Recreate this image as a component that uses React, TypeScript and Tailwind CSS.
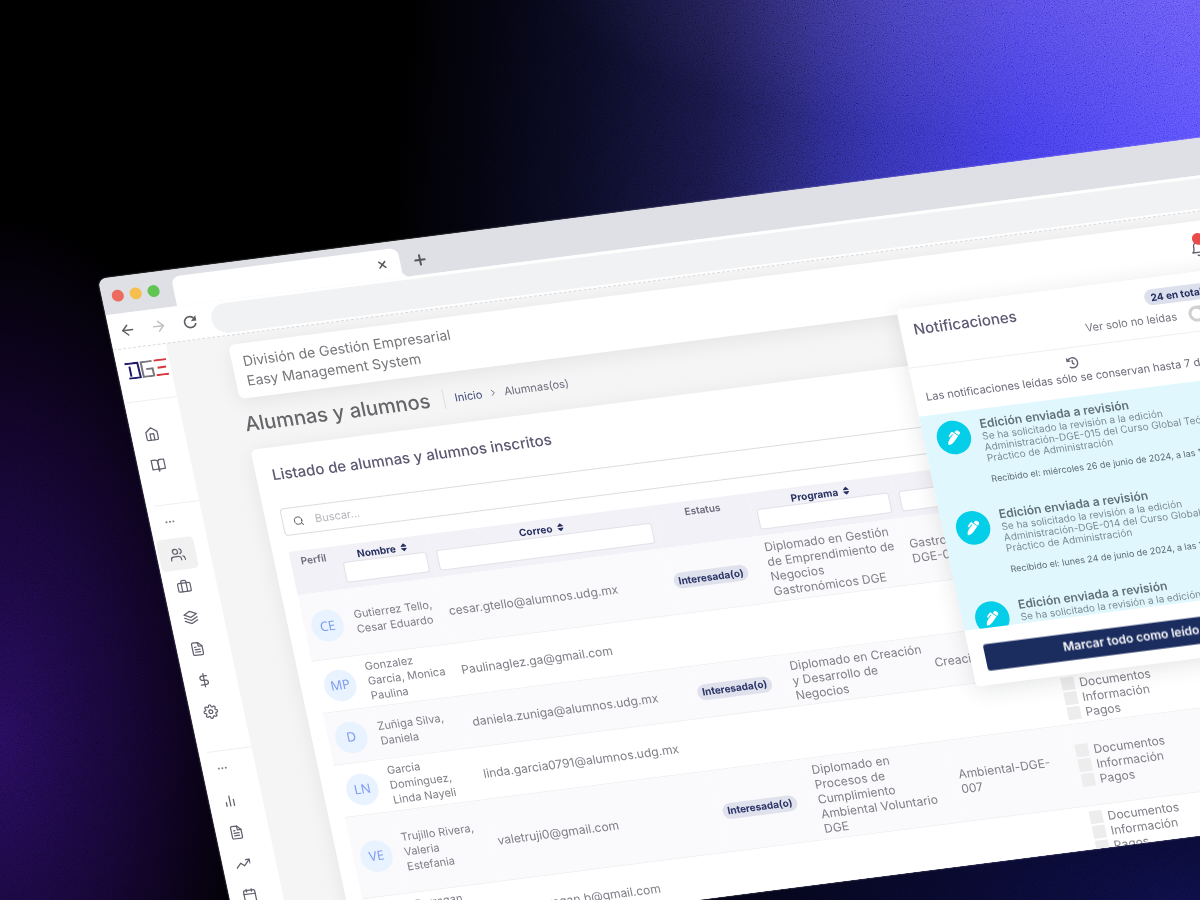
import type { ReactNode } from 'react';
import type { IconType } from 'react-icons';
import {
  FiArrowLeft,
  FiArrowRight,
  FiBarChart2,
  FiBell,
  FiBookOpen,
  FiBriefcase,
  FiCalendar,
  FiChevronRight,
  FiDollarSign,
  FiFileText,
  FiHome,
  FiLayers,
  FiMoreHorizontal,
  FiPlus,
  FiSearch,
  FiSettings,
  FiTrendingUp,
  FiUsers,
  FiX,
} from 'react-icons/fi';
import { FaHistory, FaPenAlt, FaSort } from 'react-icons/fa';
import { MdRefresh } from 'react-icons/md';

type NavEntry = { label: string; icon: IconType; active?: boolean };

const navGroups: NavEntry[][] = [
  [
    { label: 'Inicio', icon: FiHome },
    { label: 'Programas', icon: FiBookOpen },
  ],
  [
    { label: 'Alumnos', icon: FiUsers, active: true },
    { label: 'Docentes', icon: FiBriefcase },
    { label: 'Ediciones', icon: FiLayers },
    { label: 'Documentos', icon: FiFileText },
    { label: 'Pagos', icon: FiDollarSign },
    { label: 'Ajustes', icon: FiSettings },
  ],
  [
    { label: 'Estadísticas', icon: FiBarChart2 },
    { label: 'Reportes', icon: FiFileText },
    { label: 'Tendencias', icon: FiTrendingUp },
    { label: 'Calendario', icon: FiCalendar },
  ],
];

type Student = {
  initials: string;
  name: string[];
  email: string;
  status?: string;
  program?: string[];
  edition?: string[];
  documents?: boolean;
};

const students: Student[] = [
  {
    initials: 'CE',
    name: ['Gutierrez Tello,', 'Cesar Eduardo'],
    email: 'cesar.gtello@alumnos.udg.mx',
    status: 'Interesada(o)',
    program: ['Diplomado en Gestión', 'de Emprendimiento de', 'Negocios', 'Gastronómicos DGE'],
    edition: ['Gastronómicos-', 'DGE-001'],
    documents: true,
  },
  {
    initials: 'MP',
    name: ['Gonzalez', 'García, Monica', 'Paulina'],
    email: 'Paulinaglez.ga@gmail.com',
    documents: true,
  },
  {
    initials: 'D',
    name: ['Zuñiga Silva,', 'Daniela'],
    email: 'daniela.zuniga@alumnos.udg.mx',
    status: 'Interesada(o)',
    program: ['Diplomado en Creación', 'y Desarrollo de', 'Negocios'],
    edition: ['Creación-DGE'],
    documents: true,
  },
  {
    initials: 'LN',
    name: ['García', 'Domínguez,', 'Linda Nayeli'],
    email: 'linda.garcia0791@alumnos.udg.mx',
    documents: true,
  },
  {
    initials: 'VE',
    name: ['Trujillo Rivera,', 'Valeria', 'Estefania'],
    email: 'valetruji0@gmail.com',
    status: 'Interesada(o)',
    program: ['Diplomado en', 'Procesos de', 'Cumplimiento', 'Ambiental Voluntario', 'DGE'],
    edition: ['Ambiental-DGE-', '007'],
    documents: true,
  },
  {
    initials: 'BG',
    name: ['Barragan', 'Gomez,', 'Berenice'],
    email: 'be.barragan.b@gmail.com',
    documents: true,
  },
];

const notifications = [
  { edition: '015', date: 'miércoles 26 de junio de 2024, a las 10:12' },
  { edition: '014', date: 'lunes 24 de junio de 2024, a las 12:40' },
  { edition: '013', date: 'viernes 21 de junio de 2024, a las 09:05' },
];

function Backdrop() {
  return (
    <div aria-hidden="true" className="absolute inset-0 bg-black">
      <div className="absolute inset-0 bg-[radial-gradient(ellipse_700px_260px_at_100%_100%,#0c0d40,transparent)]" />
      <div className="absolute inset-0 bg-[radial-gradient(ellipse_260px_520px_at_0%_82%,#230b52,#13052d_50%,transparent)]" />
      <div className="absolute inset-x-0 top-0 h-1/2 bg-[linear-gradient(95deg,transparent_33%,#04040f_40%,#0b0b24_49%,#161540_58%,#24236a_65%,#322faa_73%,#3e37e2_83%,#574dff_100%)]" />
      <div className="absolute inset-x-0 top-0 h-1/2 bg-[radial-gradient(ellipse_560px_170px_at_92%_-6%,#8270e050,transparent)]" />
      <svg className="absolute inset-0 h-full w-full opacity-40 mix-blend-overlay">
        <filter id="grain">
          <feTurbulence type="fractalNoise" baseFrequency="0.9" numOctaves="3" stitchTiles="stitch" />
          <feColorMatrix type="matrix" values="1 1 0 0 -0.5  1 1 0 0 -0.5  1 1 0 0 -0.5  0 0 0 0 1" />
        </filter>
        <rect width="100%" height="100%" filter="url(#grain)" />
      </svg>
    </div>
  );
}

function BrowserChrome() {
  return (
    <header>
      <div className="flex h-[37px] items-end bg-[#dfe0e5]">
        <div className="flex h-full w-[72px] items-center gap-[6px] pl-[10px]">
          <span className="size-3 rounded-full bg-[#ec6a5e]" />
          <span className="size-3 rounded-full bg-[#f4bf4f]" />
          <span className="size-3 rounded-full bg-[#61c554]" />
        </div>
        <div className="flex h-[30px] w-[228px] items-center justify-end rounded-t-lg bg-white pr-3">
          <button type="button" aria-label="Cerrar pestaña" className="text-[#55585c]">
            <FiX className="size-3" strokeWidth={3} />
          </button>
        </div>
        <span className="size-2 bg-[radial-gradient(circle_at_100%_0%,#dfe0e5_8px,#ffffff_9px)]" />
        <button type="button" aria-label="Nueva pestaña" className="flex h-[30px] items-center pl-1 text-[#55585c]">
          <FiPlus className="size-4" strokeWidth={3} />
        </button>
      </div>
      <div className="flex h-9 items-center border-b border-dashed border-[#d9d9d9] bg-white pl-[10px]">
        <button type="button" aria-label="Atrás" className="w-[31px] text-[#5c5f63]">
          <FiArrowLeft className="size-[17px]" />
        </button>
        <button type="button" aria-label="Adelante" className="w-[31px] text-[#bdbfc2]">
          <FiArrowRight className="size-[17px]" />
        </button>
        <button type="button" aria-label="Recargar" className="w-[31px] text-[#5c5f63]">
          <MdRefresh className="size-[19px]" />
        </button>
        <input
          type="text"
          aria-label="Dirección"
          className="h-[30px] min-w-0 flex-1 rounded-l-full bg-[#f0f2f4] px-4 text-xs outline-none"
        />
      </div>
    </header>
  );
}

function Logo() {
  return (
    <svg viewBox="0 0 84 34" role="img" aria-label="DGE" className="h-[17px] w-[42px]" fill="none" strokeWidth="4">
      <path d="M0 2h26l1 30H4M9 8v20" stroke="#1f1a6b" />
      <path d="M55 2H33v30h21V17H41" stroke="#77777b" />
      <path d="M59 2h25M64 17h17M59 32h25" stroke="#d8383c" />
    </svg>
  );
}

function Sidebar() {
  return (
    <nav aria-label="Principal" className="w-[53px] shrink-0 bg-white text-[#625f6e]">
      <div className="flex h-[54px] items-center justify-center border-b border-[#efefef] pb-2 pl-1">
        <Logo />
      </div>
      <div className="pt-[17px]">
        {navGroups.map((group, index) => (
          <div key={index} className={index > 0 ? 'mt-6' : ''}>
            {index > 0 && (
              <div className="ml-2 border-t border-[#efefef]">
                <FiMoreHorizontal className="ml-[6px] h-[34px] w-3 opacity-80" />
              </div>
            )}
            <ul>
              {group.map(({ label, icon: Icon, active }) => (
                <li key={label}>
                  <a
                    href="#"
                    aria-label={label}
                    className={
                      active
                        ? 'ml-[2px] flex h-8 w-[37px] items-center justify-center rounded-sm bg-[#f1f1f1]'
                        : 'ml-[2px] flex h-8 w-[37px] items-center justify-center'
                    }
                  >
                    <Icon className="size-[15px]" />
                  </a>
                </li>
              ))}
            </ul>
          </div>
        ))}
      </div>
    </nav>
  );
}

function TopBar() {
  return (
    <div className="flex h-[55px] items-center justify-between rounded-md bg-white pr-7 pl-[11px] shadow-[0_4px_20px_rgba(34,41,47,0.08)]">
      <p className="text-[14px] leading-5 text-[#77777b]">
        División de Gestión Empresarial
        <br />
        Easy Management System
      </p>
      <button type="button" aria-label="Notificaciones" className="relative text-[#625f6e]">
        <FiBell className="size-4" />
        <span className="absolute -top-2 left-1 size-3 rounded-full bg-[#ea4a4a]" />
      </button>
    </div>
  );
}

function PageTitle() {
  return (
    <div className="flex h-[52px] items-center">
      <h1 className="text-[20px] font-medium text-[#66666a]">Alumnas y alumnos</h1>
      <nav aria-label="Ruta" className="ml-[14px] flex h-5 items-center gap-[6px] border-l border-[#dedee2] pl-[10px] text-[11px]">
        <a href="#" className="text-[#3f4a7c]">
          Inicio
        </a>
        <FiChevronRight className="size-[10px] text-[#6e6b7b]" />
        <span className="text-[#6e6b7b]">Alumnas(os)</span>
      </nav>
    </div>
  );
}

function HeaderCell({ label, sortable }: { label: string; sortable?: boolean }) {
  return (
    <th scope="col" className="px-[5px] pt-[3px] pb-[6px] text-center align-top text-[10px] leading-[14px] font-bold">
      {sortable ? (
        <>
          <button type="button" className="mx-auto flex items-center gap-[3px] text-[#273061]">
            {label}
            <FaSort className="size-[10px]" />
          </button>
          <input
            type="text"
            aria-label={`Filtrar ${label}`}
            className="block h-[21px] w-full rounded-[3px] border border-[#e2e1e8] bg-white px-2 text-[10px] font-normal outline-none"
          />
        </>
      ) : (
        <span className="font-semibold text-[#6e6b7b]">{label}</span>
      )}
    </th>
  );
}

function Lines({ lines }: { lines?: string[] }) {
  return (
    <>
      {(lines ?? []).map((line) => (
        <span key={line} className="block whitespace-nowrap">
          {line}
        </span>
      ))}
    </>
  );
}

function Cell({ children }: { children?: ReactNode }) {
  return <td className="border-b border-[#f0f0f3] px-[5px] pt-1 pb-[3px] align-middle">{children}</td>;
}

function StudentTable() {
  return (
    <table className="w-full table-fixed border-separate border-spacing-0 text-left">
      <colgroup>
        <col className="w-[46px]" />
        <col className="w-[94px]" />
        <col className="w-[227px]" />
        <col className="w-[96px]" />
        <col className="w-[143px]" />
        <col className="w-[120px]" />
        <col />
      </colgroup>
      <thead className="bg-[#f2f1f7]">
        <tr>
          <HeaderCell label="Perfil" />
          <HeaderCell label="Nombre" sortable />
          <HeaderCell label="Correo" sortable />
          <HeaderCell label="Estatus" />
          <HeaderCell label="Programa" sortable />
          <HeaderCell label="ID" sortable />
          <HeaderCell label="Expediente" />
        </tr>
      </thead>
      <tbody className="text-[12px] leading-[15px] text-[#807e87]">
        {students.map((s, i) => (
          <tr key={s.initials} className={i % 2 === 0 ? 'bg-[#fafafc]' : 'bg-white'}>
            <Cell>
              <span className="mx-auto flex size-8 items-center justify-center rounded-full bg-[#e9f3ff] font-['Noto_Sans',sans-serif] text-[13px] text-[#7f9cf0]">
                {s.initials}
              </span>
            </Cell>
            <Cell>
              <div className="text-[11px] leading-[15px]">
                <Lines lines={s.name} />
              </div>
            </Cell>
            <Cell>
              <a href={`mailto:${s.email}`} className="whitespace-nowrap">
                {s.email}
              </a>
            </Cell>
            <Cell>
              {s.status && (
                <span className="flex h-4 w-[75px] items-center justify-center rounded-full bg-[#dfe1ec] text-[10px] font-bold whitespace-nowrap text-[#2b3467]">
                  {s.status}
                </span>
              )}
            </Cell>
            <Cell>
              <Lines lines={s.program} />
            </Cell>
            <Cell>
              <Lines lines={s.edition} />
            </Cell>
            <Cell>
              {s.documents && (
                <ul>
                  {['Documentos', 'Información', 'Pagos'].map((item) => (
                    <li key={item} className="flex items-center gap-[5px]">
                      <span className="size-[13px] bg-[#ededee]" />
                      {item}
                    </li>
                  ))}
                </ul>
              )}
            </Cell>
          </tr>
        ))}
      </tbody>
    </table>
  );
}

function StudentsCard() {
  return (
    <section className="rounded-md bg-white px-4 pt-[18px] shadow-[0_4px_20px_rgba(34,41,47,0.08)]">
      <h2 className="text-[15px] leading-5 font-medium text-[#5e5873]">Listado de alumnas y alumnos inscritos</h2>
      <label className="mt-6 flex h-7 items-center gap-[11px] rounded border border-[#dddce1] pl-[10px]">
        <FiSearch className="size-[11px] text-[#5c5c60]" />
        <input
          type="search"
          aria-label="Buscar"
          placeholder="Buscar..."
          className="min-w-0 flex-1 bg-transparent text-[11px] outline-none placeholder:text-[#b5b4bb]"
        />
      </label>
      <div className="mt-4">
        <StudentTable />
      </div>
    </section>
  );
}

function NotificationPanel() {
  return (
    <aside className="absolute top-[132px] right-[45px] w-[324px] rounded-sm bg-white shadow-[0_4px_22px_rgba(34,41,47,0.12)]">
      <div className="flex h-[60px] items-start justify-between border-b border-[#efeff1] pt-3 pr-[14px] pl-[13px]">
        <h2 className="text-[15px] leading-5 font-medium text-[#5e5873]">Notificaciones</h2>
        <div className="flex flex-col items-end gap-[6px]">
          <span className="flex h-4 items-center rounded-full bg-[#dcdfec] px-[6px] text-[10px] font-bold text-[#273061]">24 en total</span>
          <label className="flex items-center gap-3 text-[11px] leading-4 text-[#77757f]">
            Ver solo no leídas
            <span className="relative inline-flex">
              <input type="checkbox" role="switch" className="peer h-4 w-6 appearance-none rounded-full bg-[#d0d0d3]" />
              <span className="absolute top-[3px] left-[3px] size-[10px] rounded-full bg-white peer-checked:left-3" />
            </span>
          </label>
        </div>
      </div>
      <div className="flex h-[49px] flex-col pt-[9px] pl-[11px] text-[11px] leading-4 text-[#6e6b7b]">
        <FaHistory className="mr-[11px] size-3 shrink-0 self-center" />
        <p className="mt-px whitespace-nowrap">Las notificaciones leídas sólo se conservan hasta 7 días</p>
      </div>
      <ul className="h-[218px] overflow-hidden bg-[#e0f8fd]">
        {notifications.map((n) => (
          <li key={n.edition} className="flex h-[92px] gap-[11px] pt-2 pl-[13px]">
            <span className="flex size-[34px] shrink-0 items-center justify-center rounded-full bg-[#05cfe8] text-white">
              <FaPenAlt className="size-[14px]" />
            </span>
            <div className="text-[10px] leading-[11px] whitespace-nowrap text-[#7d8b94]">
              <h3 className="text-[12px] leading-[14px] font-semibold text-[#61707b]">Edición enviada a revisión</h3>
              <p>
                Se ha solicitado la revisión a la edición
                <br />
                Administración-DGE-{n.edition} del Curso Global Teórico
                <br />
                Práctico de Administración
              </p>
              <p className="mt-[10px] text-[9px] text-[#5d6a73]">Recibido el: {n.date}</p>
            </div>
          </li>
        ))}
      </ul>
      <div className="px-[15px] pt-[15px] pb-[14px]">
        <button type="button" className="h-[27px] w-full rounded-[3px] bg-[#1b2c5f] text-[12px] font-semibold text-white">
          Marcar todo como leído
        </button>
      </div>
    </aside>
  );
}

export default function App() {
  return (
    <div className="relative h-screen overflow-hidden font-['Inter',sans-serif]">
      <Backdrop />
      <div className="relative pt-[279px] pl-[98px]">
        <div className="flex h-[692px] w-[104%] origin-top-left -rotate-[7.3deg] skew-x-[4.7deg] flex-col overflow-hidden rounded-lg bg-[#f5f5f5] shadow-[0_0_2px_rgba(255,255,255,0.6)]">
          <BrowserChrome />
          <div className="flex min-h-0 flex-1">
            <Sidebar />
            <main className="min-w-0 flex-1 pt-[9px] pr-6 pl-[61px]">
              <TopBar />
              <PageTitle />
              <StudentsCard />
            </main>
          </div>
          <NotificationPanel />
        </div>
      </div>
    </div>
  );
}
